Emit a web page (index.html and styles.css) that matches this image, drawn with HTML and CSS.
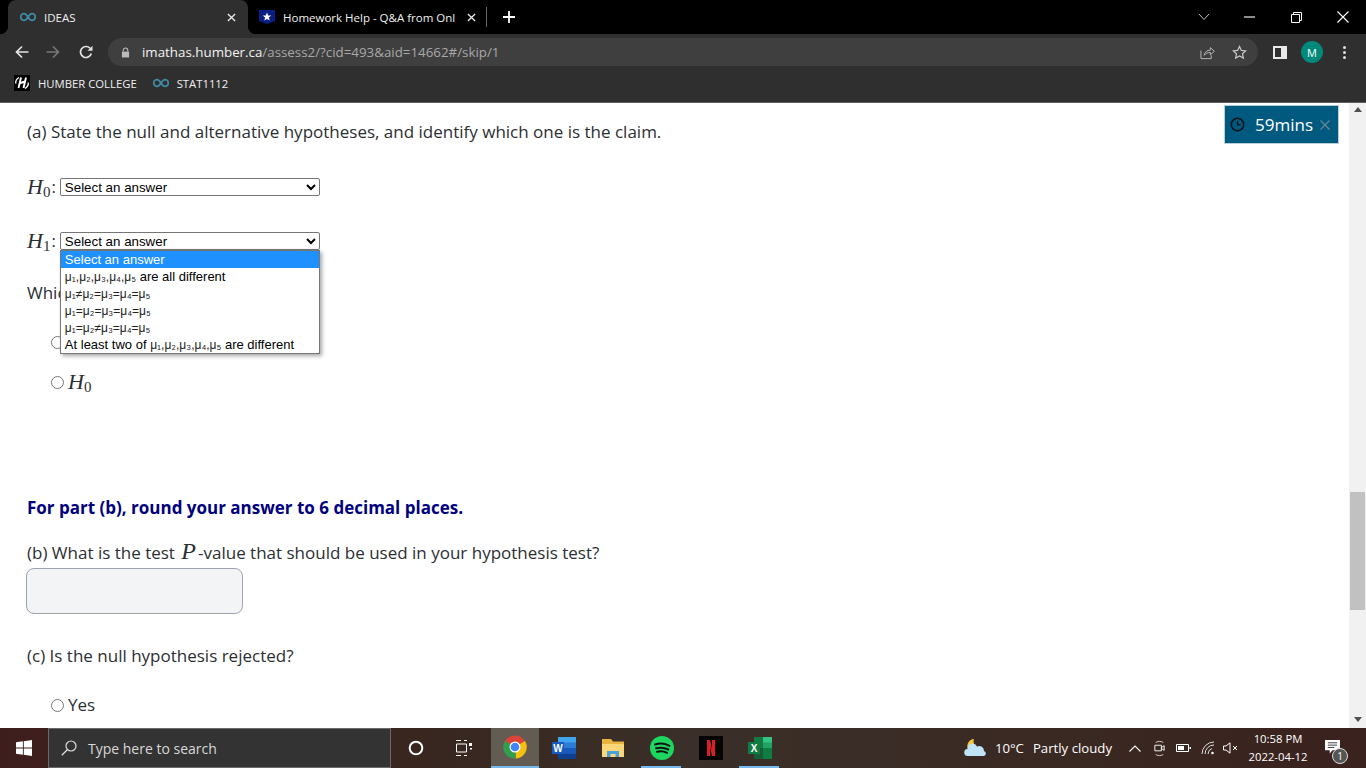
FILE: index.html
```html
<!DOCTYPE html>
<html lang="en">
<head>
  <meta charset="UTF-8" />
  <title>IDEAS</title>
  <link rel="stylesheet" href="styles.css">
</head>
<body>
  <div class="tabstrip">
    <div class="tab active">
      <svg viewBox="0 0 18 10" width="16" height="10"><path d="M9 5C7.500 2.500 6.500 1.200 4.600 1.200a3.800 3.800 0 0 0 0 7.600C6.500 8.800 7.500 7.500 9 5c1.500-2.500 2.500-3.800 4.400-3.800a3.800 3.800 0 0 1 0 7.600C11.500 8.800 10.500 7.500 9 5z" fill="none" stroke="#3f8ba6" stroke-width="2"/></svg>
      <span class="tab-title">IDEAS</span>
      <svg class="tab-x" viewBox="0 0 10 10" width="9" height="9"><path d="M1 1l8 8M9 1l-8 8" stroke="#e8e8e8" stroke-width="1.500"/></svg>
    </div>
    <div class="tab other">
      <svg viewBox="0 0 16 16" width="16" height="16"><path d="M0 1h16v11l-8 3-8-3z" fill="#0b1e85"/><path d="M8 3.500l1.200 2.900 3 .2-2.300 2 .8 3L8 10l-2.700 1.600.8-3-2.300-2 3-.2z" fill="#fff"/></svg>
      <span class="tab-title clipped">Homework Help - Q&amp;A from Onl</span>
      <svg class="tab-x" viewBox="0 0 10 10" width="9" height="9"><path d="M1 1l8 8M9 1l-8 8" stroke="#e8e8e8" stroke-width="1.500"/></svg>
    </div>
    <div class="tab-sep"></div>
    <svg class="new-tab" viewBox="0 0 12 12" width="12" height="12"><path d="M6 0v12M0 6h12" stroke="#fff" stroke-width="1.800"/></svg>
    <div class="win-controls">
      <svg viewBox="0 0 12 8" width="12" height="8"><path d="M1 1l5 5.500L11 1" fill="none" stroke="#bbb" stroke-width="1"/></svg>
      <svg viewBox="0 0 12 2" width="11" height="2"><path d="M0 1h12" stroke="#fff" stroke-width="1.200"/></svg>
      <svg viewBox="0 0 11 11" width="11" height="11"><path d="M.5 2.500h8v8h-8zM2.500 2.500V.5h8v8h-2" fill="none" stroke="#fff" stroke-width="1"/></svg>
      <svg viewBox="0 0 12 12" width="12" height="12"><path d="M.5.500l11 11M11.500.5l-11 11" stroke="#fff" stroke-width="1.100"/></svg>
    </div>
  </div>

  <div class="toolbar">
    <svg class="nav" viewBox="0 0 14 14" width="14" height="14"><path d="M13.500 7H1.500M7 1.500L1.500 7 7 12.500" fill="none" stroke="#e4e4e4" stroke-width="1.700"/></svg>
    <svg class="nav" viewBox="0 0 14 14" width="14" height="14"><path d="M.5 7h12M7 1.500L12.500 7 7 12.500" fill="none" stroke="#777" stroke-width="1.700"/></svg>
    <svg class="nav" viewBox="0 0 14 14" width="14" height="14"><path d="M12.300 8.500A5.500 5.500 0 1 1 11 3.200" fill="none" stroke="#e4e4e4" stroke-width="1.700"/><path d="M13.500.8v5h-5z" fill="#e4e4e4"/></svg>
    <div class="omnibox">
      <svg viewBox="0 0 10 12" width="9" height="11"><path d="M2.500 5V3.500a2.500 2.500 0 0 1 5 0V5" fill="none" stroke="#bbb" stroke-width="1.200"/><path d="M1 5h8v6.500H1z" fill="#bbb"/></svg>
      <div class="url"><span class="host">imathas.humber.ca</span>/assess2/?cid=493&amp;aid=14662#/skip/1</div>
      <svg class="omni-icon" viewBox="0 0 16 16" width="15" height="15"><path d="M1 6v8.500h11V11" fill="none" stroke="#bbb" stroke-width="1"/><path d="M4.500 11c.3-3.500 3-5.500 6.500-5.500V2.800l4.300 3.900L11 10.500V8C8 8 6 9 4.500 11z" fill="none" stroke="#bbb" stroke-width="1"/></svg>
      <svg class="omni-icon" viewBox="0 0 16 16" width="15" height="15"><path d="M8 1.500l2 4.300 4.600.5-3.400 3.100.9 4.600L8 11.700l-4.100 2.300.9-4.600L1.400 6.300 6 5.800z" fill="none" stroke="#c8c8c8" stroke-width="1.300"/></svg>
    </div>
    <div class="side-panel"><span></span></div>
    <div class="avatar">M</div>
    <div class="dots"><i></i><i></i><i></i></div>
  </div>

  <div class="bookmarks">
    <div class="bookmark">
      <div class="humber-logo">
        <svg viewBox="0 0 16 16" width="16" height="16"><path d="M5 2.500C2.500 4 1.500 6 1.700 8.500M11 13.500c2.500-1.500 3.500-3.500 3.300-6" fill="none" stroke="#fff" stroke-width="1.300"/><path d="M7 2.500L4.500 13M12 2.500L9.500 13M5 8.500l6-2" stroke="#fff" stroke-width="1.900"/></svg>
      </div>
      <span>HUMBER COLLEGE</span>
    </div>
    <div class="bookmark">
      <svg viewBox="0 0 18 10" width="16" height="10"><path d="M9 5C7.500 2.500 6.500 1.200 4.600 1.200a3.800 3.800 0 0 0 0 7.600C6.500 8.800 7.500 7.500 9 5c1.500-2.500 2.500-3.800 4.400-3.800a3.800 3.800 0 0 1 0 7.600C11.500 8.800 10.500 7.500 9 5z" fill="none" stroke="#3f8ba6" stroke-width="2"/></svg>
      <span>STAT1112</span>
    </div>
  </div>

  <div class="viewport">
    <main class="page">
      <p class="part-a">(a) State the null and alternative hypotheses, and identify which one is the claim.</p>

      <div class="hyp hyp-0">
        <span class="math">H<sub>0</sub></span><span class="colon">:</span>
        <select class="answer"><option>Select an answer</option></select>
      </div>

      <div class="hyp hyp-1">
        <span class="math">H<sub>1</sub></span><span class="colon">:</span>
        <div class="select-wrap">
          <select class="answer"><option>Select an answer</option></select>
          <ul class="dropdown">
            <li class="current">Select an answer</li>
            <li><span class="mu">μ₁,μ₂,μ₃,μ₄,μ₅</span> are all different</li>
            <li><span class="mu">μ₁≠μ₂=μ₃=μ₄=μ₅</span></li>
            <li><span class="mu">μ₁=μ₂=μ₃=μ₄=μ₅</span></li>
            <li><span class="mu">μ₁=μ₂≠μ₃=μ₄=μ₅</span></li>
            <li>At least two of <span class="mu">μ₁,μ₂,μ₃,μ₄,μ₅</span> are different</li>
          </ul>
        </div>
      </div>

      <p class="which">Which one is the claim?</p>

      <label class="radio radio-h1"><span class="dot"></span><span class="math">H<sub>1</sub></span></label>
      <label class="radio radio-h0"><span class="dot"></span><span class="math">H<sub>0</sub></span></label>

      <p class="round-note">For part (b), round your answer to 6 decimal places.</p>

      <p class="part-b">(b) What is the test <span class="math p-var">P</span>-value that should be used in your hypothesis test?</p>
      <div class="answer-box"></div>

      <p class="part-c">(c) Is the null hypothesis rejected?</p>

      <label class="radio radio-yes"><span class="dot"></span><span>Yes</span></label>
    </main>

    <div class="timer">
      <svg viewBox="0 0 16 16" width="15" height="15"><circle cx="8" cy="8" r="6.600" fill="none" stroke="#04121a" stroke-width="1.700"/><path d="M8 4v4.300h3.200" fill="none" stroke="#04121a" stroke-width="1.500"/></svg>
      <span class="timer-text">59mins</span>
      <svg viewBox="0 0 10 10" width="10" height="10"><path d="M.5.500l9 9M9.500.5l-9 9" stroke="#6b8796" stroke-width="1.200"/></svg>
    </div>

    <div class="scrollbar">
      <svg viewBox="0 0 8 5" width="8" height="5"><path d="M4 0l4 5H0z" fill="#505050"/></svg>
      <div class="thumb"></div>
      <svg viewBox="0 0 8 5" width="8" height="5"><path d="M0 0h8L4 5z" fill="#505050"/></svg>
    </div>
  </div>

  <div class="taskbar">
    <div class="start">
      <svg viewBox="0 0 16 16" width="16" height="16"><path d="M0 2.300l6.900-1v6.300H0zM7.800 1.200L16 0v7.600H7.800zM0 8.400h6.900v6.300l-6.900-1zM7.800 8.400H16V16l-8.200-1.200z" fill="#fff"/></svg>
    </div>
    <div class="search">
      <svg viewBox="0 0 16 16" width="16" height="16"><circle cx="10" cy="6" r="5" fill="none" stroke="#ddd" stroke-width="1.200"/><path d="M6.300 9.700L.8 15.200" stroke="#ddd" stroke-width="1.300"/></svg>
      <span>Type here to search</span>
    </div>
    <div class="task-btn cortana"><svg viewBox="0 0 16 16" width="16" height="16"><circle cx="8" cy="8" r="6.300" fill="none" stroke="#fff" stroke-width="2"/></svg></div>
    <div class="task-btn taskview"><svg viewBox="0 0 17 16" width="17" height="16"><path d="M0 .5h5M8 .5h3M0 15.500h5M8 15.500h3M.5 4h10v8H.5z" fill="none" stroke="#fff" stroke-width="1"/><path d="M13 3h3v3h-3zM14 8h2v1.500h-2z" fill="#fff"/></svg></div>

    <div class="task-btn app chrome">
      <svg viewBox="0 0 24 24" width="24" height="24"><circle cx="12" cy="12" r="11.500" fill="#db4437"/><path d="M12 12L22 6a11.500 11.500 0 0 1-9 17.500z" fill="#f4c20d"/><path d="M12 12L13 23.500A11.500 11.500 0 0 1 2 6z" fill="#2f9e4f"/><circle cx="12" cy="12" r="5.500" fill="#fff"/><circle cx="12" cy="12" r="4.300" fill="#4285f4"/></svg>
    </div>
    <div class="task-btn app word">
      <svg viewBox="0 0 24 22" width="24" height="22"><path d="M6 0h18v22H6z" fill="#2b7cd3"/><path d="M6 0h18v5.500H6z" fill="#41a5ee"/><path d="M6 11h18v5.500H6z" fill="#185abd"/><path d="M6 16.500h18V22H6z" fill="#103f91"/><path d="M0 5h12v12H0z" fill="#185abd"/><text x="6" y="15" class="tile-letter">W</text></svg>
    </div>
    <div class="task-btn app explorer">
      <svg viewBox="0 0 22 18" width="22" height="18"><path d="M0 0h9l2 2.500h11V18H0z" fill="#e8b33f"/><path d="M0 5h22v13H0z" fill="#fad87a"/><path d="M5 18v-6h12v6h-3.500v-3h-5v3z" fill="#4a9fdc"/></svg>
    </div>
    <div class="task-btn app running spotify">
      <svg viewBox="0 0 24 24" width="24" height="24"><circle cx="12" cy="12" r="12" fill="#1ed760"/><path d="M5 8.500c5-1.500 10-1 14.500 1.300M6 12.300c4.500-1.200 8.500-.8 12.300 1.200M7 15.800c3.500-.9 7-.6 10 1" fill="none" stroke="#111" stroke-width="2" stroke-linecap="round"/></svg>
    </div>
    <div class="task-btn app netflix">
      <svg viewBox="0 0 24 24" width="24" height="24"><path d="M0 0h24v24H0z" fill="#050505"/><path d="M8 4h3l2 9V4h3v16h-3l-2-8.500V20H8z" fill="#d81f26"/></svg>
    </div>
    <div class="task-btn app running excel">
      <svg viewBox="0 0 24 22" width="24" height="22"><path d="M6 0h18v22H6z" fill="#21a366"/><path d="M6 0h9v11H6z" fill="#107c41"/><path d="M15 0h9v5.500h-9z" fill="#33c481"/><path d="M6 11h9v11H6z" fill="#185c37"/><path d="M15 11h9v11h-9z" fill="#107c41"/><path d="M0 5h12v12H0z" fill="#107c41"/><text x="6" y="15" class="tile-letter">X</text></svg>
    </div>

    <div class="tray">
      <svg class="weather" viewBox="0 0 24 18" width="24" height="18"><path d="M11 0a6 6 0 0 0 3 8l-9 2a7 7 0 0 1 6-10z" fill="#f5c63c"/><path d="M5 17a3.500 3.500 0 0 1-.5-7A5 5 0 0 1 14 7.500a4.800 4.800 0 0 1 7 4.500 2.600 2.600 0 0 1 0 5z" fill="#bfe3f7"/></svg>
      <span class="temp">10°C</span>
      <span class="cond">Partly cloudy</span>
      <svg class="chev" viewBox="0 0 12 7" width="12" height="7"><path d="M.5 6.500L6 1l5.500 5.500" fill="none" stroke="#fff" stroke-width="1.100"/></svg>
      <svg class="cam" viewBox="0 0 14 18" width="13" height="17"><path d="M3 2.500c2-1.500 6-1.500 8 0M3 15.500c2 1.500 6 1.500 8 0" fill="none" stroke="#ddd" stroke-width="1"/><path d="M2 5.500h7v6H2zM9 8l3-2v5l-3-2" fill="none" stroke="#fff" stroke-width="1"/></svg>
      <svg class="battery" viewBox="0 0 15 10" width="15" height="10"><path d="M.5 1.500h12v7H.5z" fill="none" stroke="#fff" stroke-width="1"/><path d="M2 3h6v4H2z" fill="#fff"/><path d="M13.500 4H15v2h-1.500z" fill="#fff"/></svg>
      <svg class="wifi" viewBox="0 0 14 14" width="14" height="14"><path d="M1 13A12 12 0 0 1 13 1M4 13a9 9 0 0 1 9-9M7 13a6 6 0 0 1 4-5.500" fill="none" stroke="#ddd" stroke-width="1"/><circle cx="11.500" cy="12" r="1.300" fill="#fff"/></svg>
      <svg class="speaker" viewBox="0 0 15 12" width="15" height="12"><path d="M.5 4h2.500L7 .8v10.400L3 8H.5z" fill="none" stroke="#fff" stroke-width="1"/><path d="M10 4l4 4M14 4l-4 4" stroke="#fff" stroke-width="1"/></svg>
      <div class="clock"><span>10:58 PM</span><span>2022-04-12</span></div>
      <div class="notify">
        <svg viewBox="0 0 16 15" width="15" height="14"><path d="M0 0h16v11H8l-3 3.500V11H0z" fill="#fff"/><path d="M3 3h10M3 5.500h10M3 8h7" stroke="#333" stroke-width="1"/></svg>
        <span class="badge">1</span>
      </div>
    </div>
  </div>
</body>
</html>
```

FILE: styles.css
```css
* {
  box-sizing: border-box;
}

html, body {
  margin: 0;
  height: 100%;
  overflow: hidden;
}

body {
  display: flex;
  flex-direction: column;
  width: 1366px;
  height: 768px;
  background: #fff;
  font-family: "Open Sans", "Noto Sans", sans-serif;
}

p {
  margin: 0;
  white-space: nowrap;
}

/* browser chrome */
.tabstrip {
  display: flex;
  align-items: center;
  height: 34px;
  flex: none;
  background: #000;
  color: #fff;
  padding-left: 8px;
  font-size: 11.5px;
}

.tab {
  display: flex;
  align-items: center;
  height: 34px;
}

.tab.active {
  position: relative;
  width: 240px;
  padding: 0 12px;
  background: #2f2f2f;
  border-radius: 8px 8px 0 0;
}

.tab.active::before,
.tab.active::after {
  content: "";
  position: absolute;
  bottom: 0;
  width: 8px;
  height: 8px;
}

.tab.active::before {
  left: -8px;
  background: radial-gradient(circle at 0 0, #000 8px, #2f2f2f 8.5px);
}

.tab.active::after {
  right: -8px;
  background: radial-gradient(circle at 100% 0, #000 8px, #2f2f2f 8.5px);
}

.tab.other {
  width: 238px;
  padding-left: 11px;
}

.tab-title {
  flex: 1;
  margin-left: 8px;
  white-space: nowrap;
  overflow: hidden;
  color: #f0f0f0;
}

.tab.other .tab-x {
  margin: 0 10px;
}

.tab-sep {
  width: 1px;
  height: 20px;
  background: #666;
}

.new-tab {
  margin-left: 16px;
}

.win-controls {
  display: flex;
  align-items: center;
  margin-left: auto;
}

.win-controls svg {
  margin-right: 35px;
}

.win-controls svg:first-child {
  margin-right: 34px;
}

.win-controls svg:nth-child(2) {
  margin-right: 36px;
}

.win-controls svg:last-child {
  margin-right: 17px;
}

.toolbar {
  display: flex;
  align-items: center;
  height: 33px;
  flex: none;
  background: #2f2f2f;
  padding: 3px 0 0 15px;
}

.nav {
  margin-right: 17px;
}

.nav:nth-child(2) {
  margin-right: 19px;
}

.nav:nth-child(3) {
  margin-right: 15px;
}

.omnibox {
  display: flex;
  align-items: center;
  width: 1150px;
  height: 28px;
  background: #3f3f3f;
  border-radius: 14px;
  padding: 0 11px 0 13px;
}

.url {
  flex: 1;
  margin-left: 12px;
  font-size: 13.33px;
  color: #a8a8a8;
  white-space: nowrap;
}

.host {
  color: #f2f2f2;
}

.omni-icon {
  margin-left: 17px;
}

.side-panel {
  width: 14px;
  height: 13px;
  margin-left: 15px;
  border: 2px solid #e8e8e8;
  background: #e8e8e8;
}

.side-panel span {
  display: block;
  width: 6px;
  height: 9px;
  background: #2f2f2f;
}

.avatar {
  display: flex;
  align-items: center;
  justify-content: center;
  width: 22px;
  height: 22px;
  margin-left: 14px;
  border-radius: 50%;
  background: #00897b;
  color: #fff;
  font-size: 11px;
}

.dots {
  display: flex;
  flex-direction: column;
  gap: 2px;
  margin-left: 20px;
}

.dots i {
  display: block;
  width: 3px;
  height: 3px;
  border-radius: 50%;
  background: #e0e0e0;
}

.bookmarks {
  display: flex;
  align-items: center;
  height: 36px;
  flex: none;
  background: #2f2f2f;
  border-bottom: 1px solid #5f5f5f;
  padding: 0 0 3px 14px;
  color: #f0f0f0;
  font-size: 11.3px;
}

.bookmark {
  display: flex;
  align-items: center;
  gap: 8px;
  margin-right: 16px;
}

.humber-logo {
  width: 16px;
  height: 16px;
  background: #000;
}

.humber-logo svg {
  display: block;
}

/* page */
.viewport {
  position: relative;
  display: flex;
  flex: 1;
  min-height: 0;
}

.page {
  flex: 1;
  padding: 17px 0 0 27px;
  font-size: 17px;
  line-height: 24px;
  color: #2b2f33;
}

.math {
  font-family: "Liberation Serif", serif;
  font-style: italic;
  font-size: 22px;
}

.math sub {
  font-style: normal;
  font-size: 15px;
  line-height: 0;
  vertical-align: -3px;
}

.p-var {
  margin: 0 2px;
  font-size: 24px;
  line-height: 0;
}

.hyp {
  display: flex;
  align-items: center;
  height: 24px;
}

.hyp-0 {
  margin-top: 31px;
}

.hyp-1 {
  margin-top: 30px;
}

.colon {
  margin: 0 4px 0 1px;
}

.answer {
  display: block;
  width: 260px;
  height: 18px;
  padding: 0;
  font-family: "Liberation Sans", sans-serif;
  font-size: 13.33px;
  color: #000;
  background: #fff;
  border: 1px solid #767676;
  border-radius: 2px;
}

.select-wrap {
  position: relative;
}

.dropdown {
  position: absolute;
  left: 0;
  top: 18px;
  z-index: 2;
  width: 260px;
  margin: 0;
  padding: 0;
  list-style: none;
  background: #fff;
  border: 1px solid #767676;
  box-shadow: 2px 2px 4px rgba(0, 0, 0, 0.35);
  font-family: "Liberation Sans", sans-serif;
  font-size: 13px;
  line-height: 17px;
  color: #000;
}

.dropdown li {
  height: 17px;
  padding-left: 4px;
  white-space: nowrap;
}

.dropdown li.current {
  background: #1e90ff;
  color: #fff;
}

.mu {
  font-size: 12px;
  color: #222;
}

.which {
  margin-top: 28px;
}

.radio {
  display: flex;
  align-items: center;
  gap: 4px;
  height: 24px;
  padding-left: 24px;
}

.dot {
  width: 13px;
  height: 13px;
  flex: none;
  border: 1px solid #767676;
  border-radius: 50%;
  background: #fff;
}

.radio-h1 {
  margin-top: 25px;
}

.radio-h0 {
  margin-top: 16px;
}

.round-note {
  margin-top: 102px;
  font-weight: 700;
  color: #00007f;
}

.part-b {
  margin-top: 21px;
}

.answer-box {
  width: 217px;
  height: 46px;
  margin: 3px 0 0 -1px;
  background: #f3f4f6;
  border: 1px solid #9ca3af;
  border-radius: 8px;
}

.part-c {
  margin-top: 30px;
}

.radio-yes {
  margin-top: 25px;
}

.timer {
  position: absolute;
  top: 2px;
  left: 1224px;
  display: flex;
  align-items: center;
  width: 115px;
  height: 39px;
  padding-left: 5px;
  background: #005a80;
  border: 1px solid #b8cfd8;
  color: #fff;
  font-size: 17px;
}

.timer-text {
  margin: 0 7px 0 10px;
}

.scrollbar {
  display: flex;
  flex-direction: column;
  align-items: center;
  justify-content: space-between;
  width: 17px;
  flex: none;
  padding: 4px 0 6px;
  background: #f1f1f1;
}

.thumb {
  width: 15px;
  height: 118px;
  margin-top: 380px;
  margin-bottom: auto;
  background: #c1c1c1;
}

/* windows taskbar */
.taskbar {
  display: flex;
  align-items: stretch;
  height: 40px;
  flex: none;
  background: linear-gradient(90deg, #3e1e1c 0, #38261f 30%, #3a3029 50%, #3a221e 100%);
  color: #fff;
}

.start {
  display: flex;
  align-items: center;
  justify-content: center;
  width: 48px;
}

.search {
  display: flex;
  align-items: center;
  width: 343px;
  padding-left: 12px;
  background: #333;
  border: 1px solid #6a6a6a;
  font-size: 14px;
  color: #d8d8d8;
}

.search span {
  margin-left: 11px;
}

.task-btn {
  display: flex;
  align-items: center;
  justify-content: center;
  width: 48px;
}

.cortana {
  margin-left: 1px;
}

.app {
  width: 49px;
}

.app.running {
  position: relative;
}

.app.running::after {
  content: "";
  position: absolute;
  left: 4px;
  right: 5px;
  bottom: 0;
  height: 2px;
  background: #76b9ed;
}

.chrome {
  width: 48px;
  margin: 0 1px 0 3px;
  background: #635c52;
  border-bottom: 2px solid #76b9ed;
}

.word {
  margin-left: -1px;
}

.tile-letter {
  font-family: "Liberation Sans", sans-serif;
  font-size: 10px;
  font-weight: 700;
  fill: #fff;
  text-anchor: middle;
}

.tray {
  display: flex;
  align-items: center;
  margin-left: auto;
  font-size: 13.2px;
}

.weather {
  margin-right: 8px;
}

.temp {
  margin-right: 9px;
}

.chev {
  margin-left: 17px;
}

.cam {
  margin-left: 12px;
}

.battery {
  margin-left: 10px;
}

.wifi {
  margin-left: 10px;
}

.speaker {
  margin-left: 8px;
}

.clock {
  display: flex;
  flex-direction: column;
  align-items: center;
  width: 64px;
  margin: 0 10px 0 8px;
  font-size: 11.3px;
  line-height: 18px;
}

.notify {
  position: relative;
  width: 46px;
  height: 40px;
  padding: 12px 0 0 5px;
}

.badge {
  position: absolute;
  left: 12px;
  top: 20px;
  display: flex;
  align-items: center;
  justify-content: center;
  width: 16px;
  height: 16px;
  border-radius: 50%;
  background: #555;
  border: 1px solid #ddd;
  font-size: 10px;
}
```
